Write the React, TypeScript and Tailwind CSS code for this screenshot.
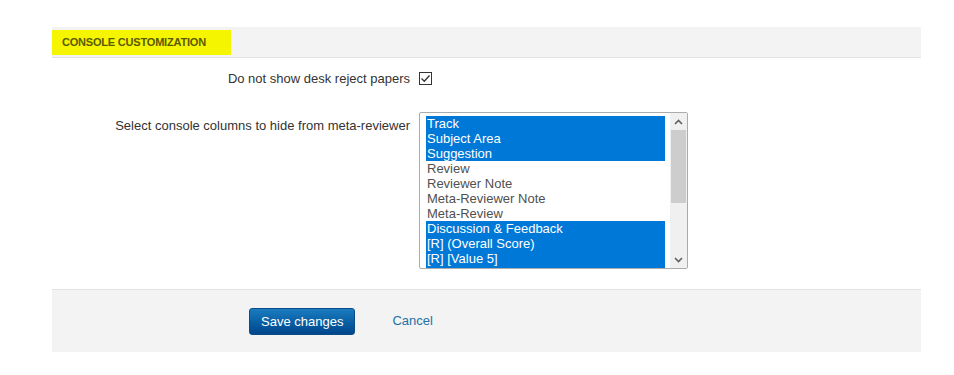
import { useState } from "react";

type column = { label: string; hidden: boolean };

const COLUMNS: column[] = [
  { label: "Track", hidden: true },
  { label: "Subject Area", hidden: true },
  { label: "Suggestion", hidden: true },
  { label: "Review", hidden: false },
  { label: "Reviewer Note", hidden: false },
  { label: "Meta-Reviewer Note", hidden: false },
  { label: "Meta-Review", hidden: false },
  { label: "Discussion & Feedback", hidden: true },
  { label: "[R] (Overall Score)", hidden: true },
  { label: "[R] [Value 5]", hidden: true },
  { label: "[R] {Another Value Added Question}", hidden: true },
];

export default function App() {
  const [deskReject, setDeskReject] = useState(true);
  const [columns, setColumns] = useState(COLUMNS);

  const toggle = (i: number) =>
    setColumns(cols => cols.map((c, n) => (n === i ? { ...c, hidden: !c.hidden } : c)));

  return (
    <main className="min-h-[375px] bg-white pt-[27px] font-['Liberation_Sans',Arial,sans-serif] text-[13px] text-[#333]">
      <div className="ml-[52px] w-[869px]">
        {/* header bar */}
        <div className="h-[31px] border-b border-[#e2e2e2] bg-[#f3f3f3] pt-[3px]">
          <div className="flex h-[25px] w-[179px] items-center bg-[#f5f500] pl-[10px]">
            <h2 className="text-[11px] font-bold leading-none tracking-[-0.2px] text-[#5a5a00]">
              CONSOLE CUSTOMIZATION
            </h2>
          </div>
        </div>

        {/* form */}
        <div className="grid grid-cols-[358px_1fr] gap-x-[9px]">
          <label className="mt-[13px] h-[15px] text-right leading-[15px]">Do not show desk reject papers</label>
          <div className="mt-[13px] flex h-[15px] items-center">
            <button
              onClick={() => setDeskReject(v => !v)}
              className="flex h-[13px] w-[13px] items-center justify-center border border-[#333] bg-white">
              {deskReject && (
                <svg width="11" height="11" viewBox="0 0 11 11">
                  <polyline points="1.5,5.5 4.3,8.3 9.5,2.5" fill="none" stroke="#333" strokeWidth="1.3" />
                </svg>
              )}
            </button>
          </div>

          <label className="mt-[26px] pt-[6px] text-right leading-[15px]">
            Select console columns to hide from meta-reviewer
          </label>
          <div className="mt-[26px]">
            <ColumnList columns={columns} onToggle={toggle} />
          </div>
        </div>

        {/* footer */}
        <div className="mt-[20px] flex h-[63px] items-center border-t border-[#e2e2e2] bg-[#f3f3f3] pl-[197px]">
          <button className="h-[27px] rounded-[3px] border border-[#0b4c86] bg-gradient-to-b from-[#1a7cc0] to-[#00468c] px-[11px] text-[13px] leading-none text-white">
            Save changes
          </button>
          <a href="#" className="ml-[37px] text-[13px] text-[#2370a8]">
            Cancel
          </a>
        </div>
      </div>
    </main>
  );
}

//* —————————————————————————————————————————————————————————————————————————————————————

const ColumnList = ({ columns, onToggle }: { columns: column[]; onToggle: (i: number) => void }) => (
  <div className="flex h-[157px] w-[269px] rounded-[2px] border border-[#ababab] bg-white">
    <ul className="flex-1 overflow-hidden pt-[3px] pl-[6px] pr-[5px] text-[13px] leading-[15px]">
      {columns.map((c, i) => (
        <li
          key={c.label}
          onClick={() => onToggle(i)}
          className={`h-[15px] cursor-default whitespace-nowrap pl-[1px] ${
            c.hidden ? "bg-[#0078d7] text-white" : "text-[#505050]"
          }`}>
          {c.label}
        </li>
      ))}
    </ul>

    {/* scrollbar */}
    <div className="flex w-[17px] flex-col bg-[#f0f0f0]">
      <div className="flex h-[17px] items-center justify-center">
        <svg width="9" height="6" viewBox="0 0 9 6">
          <polyline points="1,5 4.5,1.5 8,5" fill="none" stroke="#606060" strokeWidth="1.6" />
        </svg>
      </div>
      <div className="mx-[1px] h-[73px] bg-[#cdcdcd]" />
      <div className="flex-1" />
      <div className="flex h-[17px] items-center justify-center">
        <svg width="9" height="6" viewBox="0 0 9 6">
          <polyline points="1,1 4.5,4.5 8,1" fill="none" stroke="#606060" strokeWidth="1.6" />
        </svg>
      </div>
    </div>
  </div>
);
